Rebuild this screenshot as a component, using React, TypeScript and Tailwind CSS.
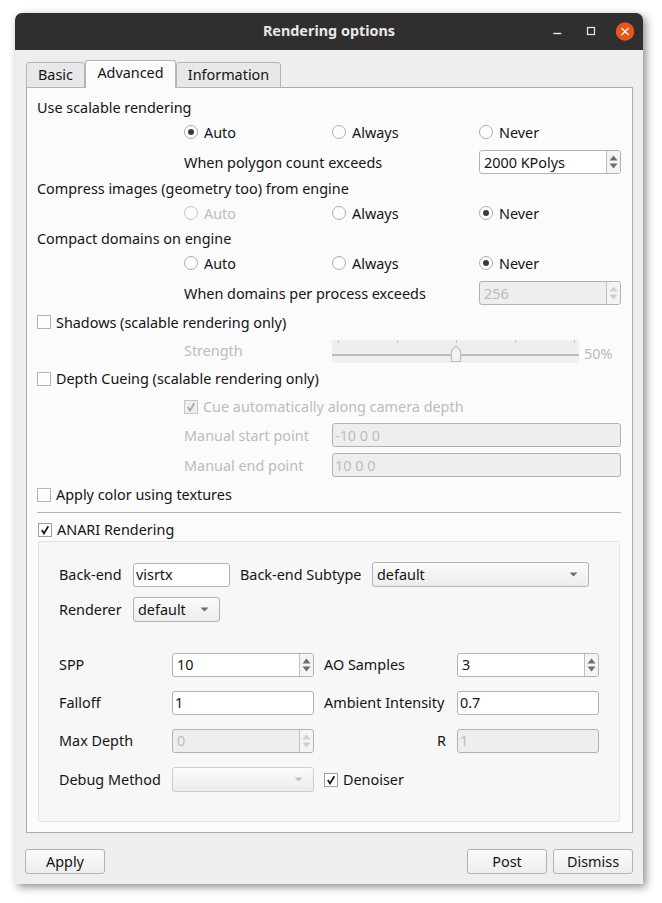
import React from "react";

const FONT = "font-['Noto_Sans','Open_Sans',sans-serif]";

function Radio({ label, checked, disabled }: { label: string; checked?: boolean; disabled?: boolean }) {
  return (
    <div className={`flex items-center gap-[6px] ${disabled ? "text-[#bcbcbc]" : ""}`}>
      <span className={`flex h-[14px] w-[14px] items-center justify-center rounded-full border bg-[#fdfdfd] ${disabled ? "border-[#c4c4c4] bg-[#f0f0f0]" : "border-[#adadad]"}`}>
        {checked ? <span className="h-[6px] w-[6px] rounded-full bg-[#3a3a3a]" /> : null}
      </span>
      <span className="pt-[2px]">{label}</span>
    </div>
  );
}

function Check({ label, checked, disabled, shift }: { label: string; checked?: boolean; disabled?: boolean; shift?: boolean }) {
  const box = disabled ? "border-[#c8c8c8] bg-[#eeeeee]" : checked ? "border-[#a0a0a0] bg-[#fdfdfd]" : "border-[#b5b5b5] bg-[#fdfdfd]";
  return (
    <div className={`flex items-center gap-[5px] ${disabled ? "text-[#bcbcbc]" : ""}`}>
      <span className={`flex h-[14px] w-[14px] items-center justify-center border ${box}`}>
        {checked ? (
          <svg width="10" height="10" viewBox="0 0 10 10">
            <path d="M1.8 5 L4 8.4 L8.3 1.2" fill="none" stroke={disabled ? "#a8a8a8" : "#1c1c1c"} strokeWidth="1.8" />
          </svg>
        ) : null}
      </span>
      <span className={shift ? "pt-[2px]" : ""}>{label}</span>
    </div>
  );
}

function Spin({ value, disabled, shift }: { value: string; disabled?: boolean; shift?: boolean }) {
  const c = disabled ? "#cfcfcf" : "#6e6e6e";
  return (
    <div className={`flex h-[24px] w-full items-stretch rounded-[3px] border border-[#b2b2b2] ${disabled ? "bg-[#eeeeee] text-[#bcbcbc]" : "bg-white"}`}>
      <span className={`flex flex-1 items-center pl-[4px] ${shift ? "pt-[2px]" : ""}`}>{value}</span>
      <span className="flex w-[14px] flex-col items-center justify-center gap-[2px] rounded-r-[3px] border-l border-[#c0c0c0] bg-[#f4f4f4]">
        <svg width="9" height="6" viewBox="0 0 9 6"><path d="M4.5 0.5 L8.5 5.5 L0.5 5.5 Z" fill={c} /></svg>
        <svg width="9" height="6" viewBox="0 0 9 6"><path d="M0.5 0.5 L8.5 0.5 L4.5 5.5 Z" fill={c} /></svg>
      </span>
    </div>
  );
}

function Field({ value, disabled, shift }: { value: string; disabled?: boolean; shift?: boolean }) {
  return (
    <div className={`flex h-[24px] w-full items-center rounded-[3px] border border-[#b2b2b2] pl-[2px] ${disabled ? "bg-[#eeeeee] text-[#bcbcbc]" : "bg-white"} ${shift ? "pt-[2px]" : ""}`}>
      {value}
    </div>
  );
}

function Combo({ value, disabled, width }: { value: string; disabled?: boolean; width: string }) {
  return (
    <div className={`flex h-[25px] items-center justify-between rounded-[3px] border bg-gradient-to-b from-[#fbfbfb] to-[#ececec] pl-[4px] pr-[10px] ${disabled ? "border-[#cccccc]" : "border-[#b2b2b2]"} ${width}`}>
      <span className="pt-[1px]">{value}</span>
      <svg width="9" height="5" viewBox="0 0 9 5"><path d="M0.5 0.5 L8.5 0.5 L4.5 4.5 Z" fill={disabled ? "#c4c4c4" : "#6e6e6e"} /></svg>
    </div>
  );
}

function Button({ label }: { label: string }) {
  return (
    <div className="flex h-[25px] w-[80px] items-center justify-center rounded-[3px] border border-[#b2b2b2] bg-gradient-to-b from-[#fbfbfb] to-[#ededed] pt-[1px]">
      {label}
    </div>
  );
}

function Row({ children, className = "" }: { children: React.ReactNode; className?: string }) {
  return <div className={`grid h-[24px] grid-cols-[147px_148px_147px_142px] items-center ${className}`}>{children}</div>;
}

function Line({ children, className = "" }: { children: React.ReactNode; className?: string }) {
  return <div className={`flex h-[24px] items-center ${className}`}>{children}</div>;
}

const dim = "text-[#bcbcbc]";

export default function App() {
  return (
    <div className={`min-h-[903px] bg-white pl-[15px] pt-[13px] text-[14.4px] leading-none text-[#141414] ${FONT}`}>
      <div className="h-[871px] w-[628px] rounded-t-[7px] bg-[#eeeeee] shadow-[3px_3px_8px_rgba(0,0,0,0.45)]">
        <div className="relative flex h-[37px] items-center justify-center rounded-t-[7px] bg-[#302e2e] text-[14.4px] font-bold text-[#e8e8e8]">
          <span>Rendering options</span>
          <div className="absolute right-[9px] top-[9px] flex items-center">
            <svg width="84" height="19" viewBox="0 0 84 19">
              <rect x="3.3" y="10.8" width="8" height="1.4" fill="#e6e6e6" />
              <rect x="37.5" y="5.5" width="7" height="7" fill="none" stroke="#e6e6e6" strokeWidth="1.2" />
              <circle cx="75" cy="9.5" r="9.2" fill="#e95420" />
              <path d="M71.5 6 L78.5 13 M78.5 6 L71.5 13" stroke="#ffffff" strokeWidth="1.2" />
            </svg>
          </div>
        </div>

        <div className="px-[11px] pt-[10px]">
          <div className="relative z-10 flex h-[28px] items-end -mb-px">
            <div className="flex h-[26px] w-[59px] items-center justify-center rounded-t-[3px] border border-[#b5b5b5] bg-[#e8e8e8] pt-[1px]">Basic</div>
            <div className="flex h-[28px] w-[91px] items-center justify-center rounded-t-[3px] border border-b-0 border-[#b5b5b5] bg-[#fbfbfb] pb-[2px]">Advanced</div>
            <div className="flex h-[26px] w-[105px] items-center justify-center rounded-t-[3px] border border-[#b5b5b5] bg-[#e8e8e8] pt-[1px]">Information</div>
          </div>

          <div className="h-[746px] w-[607px] border border-[#acacac] bg-[#fbfbfb] pl-[10px] pt-[8px]">
            <Line>Use scalable rendering</Line>
            <Row>
              <span />
              <Radio label="Auto" checked />
              <Radio label="Always" />
              <Radio label="Never" />
            </Row>
            <Row className="mt-[6px]">
              <span />
              <span className="col-span-2 pt-[2px]">When polygon count exceeds</span>
              <Spin value="2000 KPolys" shift />
            </Row>
            <Line className="mt-[3px]">Compress images (geometry too) from engine</Line>
            <Row>
              <span />
              <Radio label="Auto" disabled />
              <Radio label="Always" />
              <Radio label="Never" checked />
            </Row>
            <Line className="mt-[2px]">Compact domains on engine</Line>
            <Row>
              <span />
              <Radio label="Auto" />
              <Radio label="Always" />
              <Radio label="Never" checked />
            </Row>
            <Row className="mt-[6px]">
              <span />
              <span className="col-span-2 pt-[2px]">When domains per process exceeds</span>
              <Spin value="256" disabled shift />
            </Row>
            <Line className="mt-[5px]"><Check label="Shadows (scalable rendering only)" shift /></Line>
            <Row className="mt-[5px]">
              <span />
              <span className={dim}>Strength</span>
              <div className="col-span-2 flex items-center">
                <div className="relative h-[23px] w-[247px] bg-[#efefef]">
                  <div className="absolute left-0 right-0 top-[14px] h-[2px] bg-[#bdbdbd]" />
                  <div className="absolute left-[6px] top-0 h-[3px] w-px bg-[#c4c4c4]" />
                  <div className="absolute left-[65px] top-0 h-[3px] w-px bg-[#c4c4c4]" />
                  <div className="absolute left-[124px] top-0 h-[3px] w-px bg-[#c4c4c4]" />
                  <div className="absolute left-[183px] top-0 h-[3px] w-px bg-[#c4c4c4]" />
                  <div className="absolute left-[242px] top-0 h-[3px] w-px bg-[#c4c4c4]" />
                  <svg width="12" height="18" viewBox="0 0 12 18" className="absolute left-[118px] top-[5px]">
                    <path d="M1.5 5.5 L6 1 L10.5 5.5 L10.5 16.5 L1.5 16.5 Z" fill="#f2f2f2" stroke="#bdbdbd" strokeWidth="1.2" />
                  </svg>
                </div>
                <span className={`ml-[5px] mt-[6px] ${dim}`}>50%</span>
              </div>
            </Row>
            <Line className="mt-[4px]"><Check label="Depth Cueing (scalable rendering only)" /></Line>
            <Row className="mt-[4px]">
              <span />
              <div className="col-span-3"><Check label="Cue automatically along camera depth" checked disabled /></div>
            </Row>
            <Row className="mt-[4px]">
              <span />
              <span className={`pt-[2px] ${dim}`}>Manual start point</span>
              <div className="col-span-2"><Field value="-10 0 0" disabled shift /></div>
            </Row>
            <Row className="mt-[6px]">
              <span />
              <span className={`pt-[2px] ${dim}`}>Manual end point</span>
              <div className="col-span-2"><Field value="10 0 0" disabled shift /></div>
            </Row>
            <Line className="mt-[6px]"><Check label="Apply color using textures" /></Line>
            <div className="mt-[5px] h-px w-[584px] bg-[#b5b5b5]" />
            <Line className="mt-[5px]"><span className="ml-px"><Check label="ANARI Rendering" checked /></span></Line>

            <div className="-mt-[1px] ml-px h-[281px] w-[582px] rounded-[2px] border border-[#e4e4e4] bg-[#f7f7f7] pl-[20px] pt-[20px]">
              <div className="flex h-[25px] items-center">
                <span className="w-[74px] pt-[1px]">Back-end</span>
                <div className="flex h-[24px] w-[97px] items-center rounded-[3px] border border-[#b2b2b2] bg-white pl-[2px] pt-[1px]">visrtx</div>
                <span className="ml-[10px] w-[132px] pt-[1px]">Back-end Subtype</span>
                <Combo value="default" width="w-[217px]" />
              </div>
              <div className="mt-[10px] flex h-[25px] items-center">
                <span className="w-[74px] pt-[1px]">Renderer</span>
                <Combo value="default" width="w-[87px]" />
              </div>
              <div className="mt-[31px] grid grid-cols-[113px_142px_143px_142px] items-center gap-y-[14px]">
                <span>SPP</span>
                <Spin value="10" />
                <span className="pl-[10px]">AO Samples</span>
                <Spin value="3" />

                <span>Falloff</span>
                <Field value="1" />
                <span className="pl-[10px]">Ambient Intensity</span>
                <Field value="0.7" />

                <span>Max Depth</span>
                <Spin value="0" disabled />
                <span className="pr-[11px] text-right">R</span>
                <Field value="1" disabled />

                <span className="pt-[1px]">Debug Method</span>
                <Combo value="" disabled width="w-[142px]" />
                <div className="pl-[10px]"><Check label="Denoiser" checked shift /></div>
                <span />
              </div>
            </div>
          </div>

          <div className="-mx-[1px] mt-[16px] flex items-center justify-between">
            <Button label="Apply" />
            <div className="flex gap-[6px]">
              <Button label="Post" />
              <Button label="Dismiss" />
            </div>
          </div>
        </div>
      </div>
    </div>
  );
}
